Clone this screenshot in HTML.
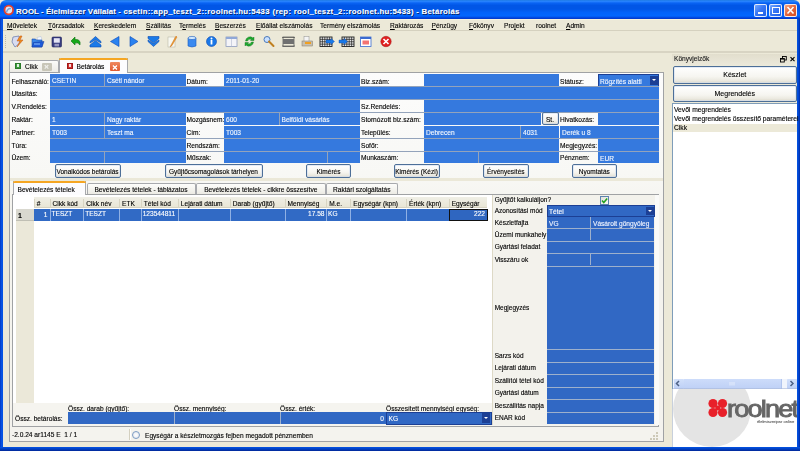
<!DOCTYPE html><html><head><meta charset="utf-8"><style>
html,body{margin:0;padding:0;}
body{width:800px;height:451px;overflow:hidden;position:relative;background:#ece9d8;font-family:"Liberation Sans", sans-serif;}
div{box-sizing:border-box;}
#root div{-webkit-text-stroke:0.12px currentColor;}
#root{position:absolute;left:0;top:0;width:800px;height:451px;overflow:hidden;will-change:opacity;opacity:.999;}
</style></head><body><div id="root">
<div style="position:absolute;left:0px;top:0px;width:800px;height:19px;background:linear-gradient(#1c78e0 0px,#2a86ff 1.2px,#0a64f4 3px,#0056e6 5.5px,#0056e6 9px,#0062fa 12.5px,#0066fe 16px,#0040d8 18px,#0038c8 19px);border-radius:6px 6px 0 0;"></div>
<div style="position:absolute;left:3px;top:19px;width:794px;height:1px;background:#f8f2dc;"></div>
<div style="position:absolute;left:0px;top:19px;width:3px;height:432px;background:linear-gradient(90deg,#0030b8,#0a52e0 1px,#0454e5);"></div>
<div style="position:absolute;left:797px;top:19px;width:3px;height:432px;background:linear-gradient(90deg,#0454e5,#0040c8 2px,#0028a0);"></div>
<div style="position:absolute;left:0px;top:447px;width:800px;height:4px;background:linear-gradient(#0454e5,#0036b0 3px,#002494);"></div>
<svg style="position:absolute;left:3px;top:4px" width="12" height="12"><circle cx="5.8" cy="6" r="4.3" fill="#dfe8f4" stroke="#e8402a" stroke-width="1.8"/><path d="M3.5 8.5 Q4.5 4 8 4.5" stroke="#7aa0d8" stroke-width="1.4" fill="none"/></svg>
<div style="position:absolute;left:16px;top:6.62px;font-size:7.8px;line-height:9.36px;color:#fff;white-space:pre;font-weight:bold;letter-spacing:0.1px;text-shadow:1px 1px 0 #0a246a;">ROOL - Élelmiszer Vállalat - </div>
<div style="position:absolute;left:123.4px;top:6.62px;font-size:7.8px;line-height:9.36px;color:#fff;white-space:pre;font-weight:bold;letter-spacing:0.3px;text-shadow:1px 1px 0 #0a246a;">csetin::app_teszt_2::roolnet.hu:5433 </div>
<div style="position:absolute;left:272.5px;top:6.62px;font-size:7.8px;line-height:9.36px;color:#fff;white-space:pre;font-weight:bold;letter-spacing:0.29px;text-shadow:1px 1px 0 #0a246a;">(rep: rool_teszt_2::roolnet.hu:5433) - Betárolás</div>
<div style="position:absolute;left:754px;top:4.3px;width:13px;height:12.5px;border:1px solid rgba(255,255,255,.85);border-radius:2px;background:linear-gradient(135deg,#74a8ff,#3a78f4 45%,#1f5ee8);"><div style="position:absolute;left:3px;top:7px;width:5px;height:1.6px;background:#fff"></div></div>
<div style="position:absolute;left:769px;top:4.3px;width:13px;height:12.5px;border:1px solid rgba(255,255,255,.85);border-radius:2px;background:linear-gradient(135deg,#74a8ff,#3a78f4 45%,#1f5ee8);"><div style="position:absolute;left:2px;top:2px;width:7.5px;height:6.5px;border:1px solid #fff;border-top-width:1.8px"></div></div>
<div style="position:absolute;left:783.5px;top:4.3px;width:13px;height:12.5px;border:1px solid rgba(255,255,255,.85);border-radius:2px;background:linear-gradient(135deg,#f4a888,#e66a40 45%,#d24c22);"><svg style="position:absolute;left:0;top:0" width="11" height="11"><path d="M2.5 2 L8.5 8.5 M8.5 2 L2.5 8.5" stroke="#fff" stroke-width="1.6"/></svg></div>
<div style="position:absolute;left:3px;top:29.5px;width:794px;height:1.0px;background:#d5d1bf"></div>
<div style="position:absolute;left:7px;top:22.14px;font-size:6.6px;line-height:7.92px;color:#000;white-space:pre;"><u>M</u>űveletek</div>
<div style="position:absolute;left:48px;top:22.14px;font-size:6.6px;line-height:7.92px;color:#000;white-space:pre;"><u>T</u>örzsadatok</div>
<div style="position:absolute;left:94px;top:22.14px;font-size:6.6px;line-height:7.92px;color:#000;white-space:pre;"><u>K</u>ereskedelem</div>
<div style="position:absolute;left:146px;top:22.14px;font-size:6.6px;line-height:7.92px;color:#000;white-space:pre;"><u>S</u>zállítás</div>
<div style="position:absolute;left:179px;top:22.14px;font-size:6.6px;line-height:7.92px;color:#000;white-space:pre;">T<u>e</u>rmelés</div>
<div style="position:absolute;left:215px;top:22.14px;font-size:6.6px;line-height:7.92px;color:#000;white-space:pre;"><u>B</u>eszerzés</div>
<div style="position:absolute;left:256px;top:22.14px;font-size:6.6px;line-height:7.92px;color:#000;white-space:pre;"><u>E</u>lőállat elszámolás</div>
<div style="position:absolute;left:320px;top:22.14px;font-size:6.6px;line-height:7.92px;color:#000;white-space:pre;">Termény elszámolás</div>
<div style="position:absolute;left:390px;top:22.14px;font-size:6.6px;line-height:7.92px;color:#000;white-space:pre;"><u>R</u>aktározás</div>
<div style="position:absolute;left:431.5px;top:22.14px;font-size:6.6px;line-height:7.92px;color:#000;white-space:pre;"><u>P</u>énzügy</div>
<div style="position:absolute;left:469px;top:22.14px;font-size:6.6px;line-height:7.92px;color:#000;white-space:pre;"><u>F</u>őkönyv</div>
<div style="position:absolute;left:504px;top:22.14px;font-size:6.6px;line-height:7.92px;color:#000;white-space:pre;">Pro<u>j</u>ekt</div>
<div style="position:absolute;left:536px;top:22.14px;font-size:6.6px;line-height:7.92px;color:#000;white-space:pre;">roolnet</div>
<div style="position:absolute;left:566px;top:22.14px;font-size:6.6px;line-height:7.92px;color:#000;white-space:pre;"><u>A</u>dmin</div>
<div style="position:absolute;left:3px;top:51px;width:794px;height:1.6000000000000014px;background:#d8d4c3"></div>
<div style="position:absolute;left:5px;top:35px;width:1px;height:1px;background:#c0bca8"></div>
<div style="position:absolute;left:5px;top:37px;width:1px;height:1px;background:#c0bca8"></div>
<div style="position:absolute;left:5px;top:39px;width:1px;height:1px;background:#c0bca8"></div>
<div style="position:absolute;left:5px;top:41px;width:1px;height:1px;background:#c0bca8"></div>
<div style="position:absolute;left:5px;top:43px;width:1px;height:1px;background:#c0bca8"></div>
<div style="position:absolute;left:5px;top:45px;width:1px;height:1px;background:#c0bca8"></div>
<div style="position:absolute;left:5px;top:47px;width:1px;height:1px;background:#c0bca8"></div>
<svg style="position:absolute;left:0;top:0" width="800" height="60" viewBox="0 0 800 60"><path d="M13 37 L19 36 L20 43 L15 47 L12 42Z" fill="#d8dcf0" stroke="#7080b0" stroke-width=".8"/><path d="M20 36 L17 41 L20 41 L17 47 L23 40 L20 40 L22 36Z" fill="#f09020" stroke="#c05010" stroke-width=".5"/><path d="M37 37.5 L41 36.5 L42 40 L38 41Z" fill="#f4f8ff" stroke="#a0b0d0" stroke-width=".4"/><path d="M32 39 L35.5 39 L36.5 40 L42 40 L42 47 L32 47Z" fill="#3a86e8" stroke="#1a4ab0" stroke-width=".6"/><path d="M33.5 42.5 L44 41.5 L42 47 L32 47Z" fill="#1e5ad8" stroke="#10389a" stroke-width=".5"/><rect x="34" y="43.5" width="6" height="1" fill="#8cc0f8"/><rect x="52" y="37" width="9.5" height="10" rx="1" fill="#383c80" stroke="#20245a" stroke-width=".6"/><rect x="53.8" y="38.2" width="6" height="4.5" fill="#e4e4f4"/><rect x="54.5" y="43.8" width="4.5" height="2.6" fill="#9898c0"/><path d="M71 41 L75 37 L75 39.5 Q81 39 80 45 Q78 42 75 43 L75 45Z" fill="#18a818" stroke="#0a7010" stroke-width=".6"/><path d="M90 41.5 L95.5 36.5 L101 41.5 L101 43 L95.5 39.8 L90 43Z" fill="#1a7ae8" stroke="#0a4ab0" stroke-width=".6" stroke-linejoin="round"/><path d="M90 45 L95.5 40.5 L101 45 L101 47 L90 47Z" fill="#1a7ae8" stroke="#0a4ab0" stroke-width=".6" stroke-linejoin="round"/><path d="M110.5 41.5 L119 36.5 L119 46.5Z" fill="#2a82f0" stroke="#0a4ab8" stroke-width=".6" stroke-linejoin="round"/><path d="M138 41.5 L130 36.5 L130 46.5Z" fill="#2a82f0" stroke="#0a4ab8" stroke-width=".6" stroke-linejoin="round"/><path d="M148 36.5 L159 36.5 L159 38.5 L153.5 43 L148 38.5Z" fill="#1a7ae8" stroke="#0a4ab0" stroke-width=".6" stroke-linejoin="round"/><path d="M148 40 L153.5 43.5 L159 40 L159 41.5 L153.5 46.5 L148 41.5Z" fill="#1a7ae8" stroke="#0a4ab0" stroke-width=".6" stroke-linejoin="round"/><rect x="168" y="37" width="7" height="10" fill="#f8f8f0" stroke="#b0b0a0" stroke-width=".5"/><path d="M176 36 L171 45 L170 47 L172 45.5 L177 37Z" fill="#f0a030" stroke="#c06010" stroke-width=".4"/><path d="M188 38 L188 46 Q192 48 196 46 L196 38Z" fill="#3a8af0" stroke="#1a5ac0" stroke-width=".6"/><ellipse cx="192" cy="38" rx="4" ry="1.6" fill="#d0e8ff" stroke="#1a5ac0" stroke-width=".6"/><circle cx="211.5" cy="41.5" r="5" fill="#1a78e8" stroke="#0a48b0" stroke-width=".6"/><rect x="210.6" y="40" width="1.8" height="4.5" fill="#fff"/><circle cx="211.5" cy="38.5" r="1" fill="#fff"/><rect x="226" y="37" width="11" height="9.5" fill="#f4f4f8" stroke="#8090b8" stroke-width=".7"/><rect x="226" y="37" width="11" height="2" fill="#90a8d8"/><line x1="231.5" y1="39" x2="231.5" y2="46.5" stroke="#b0b8d0" stroke-width=".6"/><path d="M245.5 41 A4.5 4.5 0 0 1 253 38 L254 37 L254 40.5 L250.5 40.5 L251.5 39.5 A3 3 0 0 0 247.5 41Z" fill="#20a830" stroke="#0a7018" stroke-width=".4"/><path d="M253.5 42 A4.5 4.5 0 0 1 246 45 L245 46 L245 42.5 L248.5 42.5 L247.5 43.5 A3 3 0 0 0 251.5 42Z" fill="#20a830" stroke="#0a7018" stroke-width=".4"/><circle cx="267" cy="39.5" r="3" fill="#c8e0ff" stroke="#4a78b8" stroke-width="1"/><path d="M269 41.5 L273.5 46" stroke="#c08020" stroke-width="2" stroke-linecap="round"/><rect x="283" y="37" width="11" height="9.5" fill="none" stroke="#606060" stroke-width=".8"/><rect x="283" y="39" width="11" height="5" fill="#707070"/><line x1="282" y1="37.5" x2="295" y2="37.5" stroke="#404040" stroke-width=".6"/><line x1="282" y1="46" x2="295" y2="46" stroke="#404040" stroke-width=".6"/><rect x="304" y="36.5" width="5" height="5" fill="#f4f4f4" stroke="#909090" stroke-width=".5"/><rect x="302" y="41" width="10.5" height="5" fill="#c8c0b0" stroke="#807868" stroke-width=".5"/><rect x="305" y="42" width="6" height="2" fill="#f0a020"/><rect x="320" y="37" width="12" height="9.5" fill="#e8e8e8" stroke="#202020" stroke-width=".9"/><line x1="322.4" y1="37" x2="322.4" y2="46.5" stroke="#202020" stroke-width=".7"/><line x1="324.8" y1="37" x2="324.8" y2="46.5" stroke="#202020" stroke-width=".7"/><line x1="327.2" y1="37" x2="327.2" y2="46.5" stroke="#202020" stroke-width=".7"/><line x1="329.6" y1="37" x2="329.6" y2="46.5" stroke="#202020" stroke-width=".7"/><line x1="320" y1="39.375" x2="332" y2="39.375" stroke="#202020" stroke-width=".7"/><line x1="320" y1="41.75" x2="332" y2="41.75" stroke="#202020" stroke-width=".7"/><line x1="320" y1="44.125" x2="332" y2="44.125" stroke="#202020" stroke-width=".7"/><path d="M326 40 L331 40 L331 38.5 L334.5 41.5 L331 44.5 L331 43 L326 43Z" fill="#1a7ae8" stroke="#0a4ab0" stroke-width=".4"/><rect x="342" y="37" width="12" height="9.5" fill="#e8e8e8" stroke="#202020" stroke-width=".9"/><line x1="344.4" y1="37" x2="344.4" y2="46.5" stroke="#202020" stroke-width=".7"/><line x1="346.8" y1="37" x2="346.8" y2="46.5" stroke="#202020" stroke-width=".7"/><line x1="349.2" y1="37" x2="349.2" y2="46.5" stroke="#202020" stroke-width=".7"/><line x1="351.6" y1="37" x2="351.6" y2="46.5" stroke="#202020" stroke-width=".7"/><line x1="342" y1="39.375" x2="354" y2="39.375" stroke="#202020" stroke-width=".7"/><line x1="342" y1="41.75" x2="354" y2="41.75" stroke="#202020" stroke-width=".7"/><line x1="342" y1="44.125" x2="354" y2="44.125" stroke="#202020" stroke-width=".7"/><path d="M339 40 L344 40 L344 38.5 L347.5 41.5 L344 44.5 L344 43 L339 43Z" fill="#1a7ae8" stroke="#0a4ab0" stroke-width=".4"/><rect x="360.5" y="37" width="10.5" height="9.5" fill="#fff" stroke="#3a6ad0" stroke-width=".8"/><rect x="360.5" y="37" width="10.5" height="2" fill="#3a6ad0"/><rect x="362.5" y="40.5" width="6.5" height="4" fill="#f05050" opacity=".8"/><circle cx="386" cy="41.5" r="5.2" fill="#e02020" stroke="#a01010" stroke-width=".5"/><path d="M383.5 39 L388.5 44 M388.5 39 L383.5 44" stroke="#fff" stroke-width="1.6"/></svg>
<div style="position:absolute;left:672px;top:54px;width:125px;height:11px;background:linear-gradient(#e2decd,#ebe8da);"></div>
<div style="position:absolute;left:674px;top:55.14px;font-size:6.6px;line-height:7.92px;color:#222;white-space:pre;">Könyvjelzők</div>
<svg style="position:absolute;left:778px;top:54px" width="20" height="11"><rect x="4.5" y="2.5" width="3.8" height="3.5" fill="none" stroke="#000" stroke-width=".9"/><rect x="2.5" y="4.5" width="3.8" height="3.5" fill="#e6e2d2" stroke="#000" stroke-width=".9"/><line x1="2.5" y1="5" x2="6.3" y2="5" stroke="#000" stroke-width="1.1"/><path d="M12.5 3.2 L16.5 7.2 M16.5 3.2 L12.5 7.2" stroke="#000" stroke-width="1.1"/></svg>
<div style="position:absolute;left:673px;top:65.5px;width:123.5px;height:18.0px;border:1px solid #4d6f98;border-radius:2px;background:linear-gradient(#ffffff,#f6f5f0 60%,#ebe9e0 85%,#dcd8c8);box-shadow:inset 0 0 0 1px rgba(210,222,240,.6);"></div>
<div style="position:absolute;left:673px;width:123.5px;top:71.40px;font-size:7px;line-height:8.40px;color:#000;white-space:pre;text-align:center;">Készlet</div>
<div style="position:absolute;left:673px;top:84.5px;width:123.5px;height:17.0px;border:1px solid #4d6f98;border-radius:2px;background:linear-gradient(#ffffff,#f6f5f0 60%,#ebe9e0 85%,#dcd8c8);box-shadow:inset 0 0 0 1px rgba(210,222,240,.6);"></div>
<div style="position:absolute;left:673px;width:123.5px;top:89.90px;font-size:7px;line-height:8.40px;color:#000;white-space:pre;text-align:center;">Megrendelés</div>
<div style="position:absolute;left:672px;top:102.5px;width:125px;height:286.5px;background:#fff;border:1px solid #7f9db9;border-right:none;"></div>
<div style="position:absolute;left:673px;top:123.5px;width:124px;height:8.0px;background:#ece9d8;"></div>
<div style="position:absolute;left:674px;top:105.58px;font-size:6.7px;line-height:8.04px;color:#000;white-space:pre;">Vevői megrendelés</div>
<div style="position:absolute;left:674px;top:115.08px;font-size:6.7px;line-height:8.04px;color:#000;white-space:pre;">Vevői megrendelés összesítő paraméterei</div>
<div style="position:absolute;left:674px;top:124.38px;font-size:6.7px;line-height:8.04px;color:#000;white-space:pre;">Cikk</div>
<div style="position:absolute;left:673px;top:378.5px;width:124px;height:10.5px;background:#f0f4fc;"></div>
<div style="position:absolute;left:673.5px;top:378.8px;width:10.0px;height:9.800000000000011px;background:linear-gradient(#d2e0fa,#bccff6);border-radius:1px;"></div>
<div style="position:absolute;left:683.5px;top:378.8px;width:98.5px;height:9.800000000000011px;background:linear-gradient(#cddcfa,#bed0f6);border-right:1px solid #b0c4ee;"></div>
<div style="position:absolute;left:787px;top:378.8px;width:9.5px;height:9.800000000000011px;background:linear-gradient(#d2e0fa,#bccff6);border-radius:1px;"></div>
<div style="position:absolute;left:673px;top:388.2px;width:124px;height:1.0px;background:#a8b8d8;opacity:.6"></div>
<svg style="position:absolute;left:673px;top:378px" width="124" height="11"><path d="M6 3 L3.5 5.5 L6 8" stroke="#4d6185" stroke-width="1.5" fill="none"/><path d="M117.5 3 L120 5.5 L117.5 8" stroke="#4d6185" stroke-width="1.5" fill="none"/><path d="M57 4 L57 7.5 M59 4 L59 7.5 M61 4 L61 7.5" stroke="#eef3fd" stroke-width=".8"/></svg>
<div style="position:absolute;left:672px;top:389px;width:125px;height:58px;background:#fff;border-left:1px solid #c8d0dc;"></div>
<div style="position:absolute;left:673px;top:389px;width:124px;height:58px;overflow:hidden;"><div style="position:absolute;left:0px;top:-18px;width:78px;height:76px;border-radius:50%;background:#e4e4e4;"></div><svg style="position:absolute;left:0;top:0" width="124" height="58" viewBox="673 389 124 58"><circle cx="713" cy="403.5" r="4.6" fill="#e8202a"/><circle cx="722.5" cy="403.5" r="4.6" fill="#e8202a"/><circle cx="713" cy="412.5" r="4.6" fill="#e8202a"/><circle cx="722.5" cy="412.5" r="4.6" fill="#e8202a"/><circle cx="717.7" cy="408" r="2.5" fill="#e8202a"/></svg><div style="position:absolute;left:54px;top:7.7px;font-size:24px;line-height:24px;font-weight:normal;color:#666;letter-spacing:-1.6px;-webkit-text-stroke:0.9px #666;transform:scaleX(1.13);transform-origin:0 0;white-space:pre">roolnet</div><div style="position:absolute;left:84px;top:29.5px;font-size:4.1px;line-height:5px;color:#666;white-space:pre">élelmiszeripar online</div></div>
<div style="position:absolute;left:9px;top:59.5px;width:50px;height:12.5px;background:linear-gradient(#fbfbf9,#ecebe5);border:1px solid #a7a9ad;border-bottom:none;border-radius:2px 2px 0 0;"></div>
<div style="position:absolute;left:15px;top:62.5px;width:5.5px;height:6.0px;background:#3e9c3e;border:1px solid #2a7a2a;"></div>
<div style="position:absolute;left:17px;top:64px;width:1.5px;height:3px;background:#e0f0e0;"></div>
<div style="position:absolute;left:25px;top:63.14px;font-size:6.6px;line-height:7.92px;color:#000;white-space:pre;">Cikk</div>
<div style="position:absolute;left:42px;top:63px;width:9.5px;height:7.5px;background:#c8c6b8;border-radius:1px;"></div>
<div style="position:absolute;left:42px;width:9.5px;top:64.10px;font-size:6px;line-height:7.20px;color:#eeeeea;white-space:pre;text-align:center;font-weight:bold;">✕</div>
<div style="position:absolute;left:59px;top:58px;width:68.5px;height:15px;background:#fcfcfe;border:1px solid #a7a9ad;border-top:none;border-bottom:none;"></div>
<div style="position:absolute;left:59px;top:57.5px;width:68.5px;height:2.5px;background:#f5a623;border-radius:2px 2px 0 0;"></div>
<div style="position:absolute;left:67px;top:62.5px;width:5.5px;height:6.5px;background:#d03030;border:1px solid #a01818;"></div>
<div style="position:absolute;left:68.5px;top:64px;width:2.5px;height:3px;background:#f8d8d8;"></div>
<div style="position:absolute;left:76.5px;top:63.14px;font-size:6.6px;line-height:7.92px;color:#000;white-space:pre;">Betárolás</div>
<div style="position:absolute;left:110px;top:62px;width:9.5px;height:8.5px;background:linear-gradient(#f08a60,#e05a30);border-radius:1px;"></div>
<div style="position:absolute;left:110px;width:9.5px;top:63.60px;font-size:6.5px;line-height:7.80px;color:#fff;white-space:pre;text-align:center;font-weight:bold;">✕</div>
<div style="position:absolute;left:8.5px;top:72px;width:655.5px;height:369.5px;border:1px solid #a0a2a4;background:linear-gradient(#fcfcfc 0px,#f8f8f5 100px,#f4f3ee 140px,#f4f3ee);"></div>
<div style="position:absolute;left:60px;top:72px;width:67px;height:1.5px;background:#fcfcfe;"></div>
<div style="position:absolute;left:11.5px;top:77.64px;font-size:6.6px;line-height:7.92px;color:#000;white-space:pre;">Felhasználó:</div>
<div style="position:absolute;left:50px;top:74px;width:54px;height:12px;background:#3579de;"></div>
<div style="position:absolute;left:52px;top:77.44px;font-size:6.6px;line-height:7.92px;color:#f4f8ff;white-space:pre;">CSETIN</div>
<div style="position:absolute;left:105px;top:74px;width:81px;height:12px;background:#3579de;"></div>
<div style="position:absolute;left:107px;top:77.44px;font-size:6.6px;line-height:7.92px;color:#f4f8ff;white-space:pre;">Cséti nándor</div>
<div style="position:absolute;left:186.5px;top:77.64px;font-size:6.6px;line-height:7.92px;color:#000;white-space:pre;">Dátum:</div>
<div style="position:absolute;left:224px;top:74px;width:136px;height:12px;background:#3579de;"></div>
<div style="position:absolute;left:226px;top:77.44px;font-size:6.6px;line-height:7.92px;color:#f4f8ff;white-space:pre;">2011-01-20</div>
<div style="position:absolute;left:361px;top:77.64px;font-size:6.6px;line-height:7.92px;color:#000;white-space:pre;">Biz.szám:</div>
<div style="position:absolute;left:424px;top:74px;width:135px;height:12px;background:#3579de;"></div>
<div style="position:absolute;left:560px;top:77.64px;font-size:6.6px;line-height:7.92px;color:#000;white-space:pre;">Státusz:</div>
<div style="position:absolute;left:597.5px;top:73.5px;width:61.5px;height:13.5px;background:#3579de;border:1px solid #1c3f94;"></div>
<div style="position:absolute;left:600px;top:77.64px;font-size:6.6px;line-height:7.92px;color:#f4f8ff;white-space:pre;">Rögzítés alatti</div>
<div style="position:absolute;left:650px;top:75.5px;width:7.5px;height:9.5px;background:#1c3f94;"></div>
<div style="position:absolute;left:651.8px;top:79px;width:0;height:0;border-left:2px solid transparent;border-right:2px solid transparent;border-top:2.5px solid #fff;"></div>
<div style="position:absolute;left:11.5px;top:90.14px;font-size:6.6px;line-height:7.92px;color:#000;white-space:pre;">Utasítás:</div>
<div style="position:absolute;left:50px;top:87px;width:609px;height:12px;background:#3579de;"></div>
<div style="position:absolute;left:11.5px;top:103.14px;font-size:6.6px;line-height:7.92px;color:#000;white-space:pre;">V.Rendelés:</div>
<div style="position:absolute;left:50px;top:100px;width:310px;height:11.5px;background:#3579de;"></div>
<div style="position:absolute;left:361px;top:103.14px;font-size:6.6px;line-height:7.92px;color:#000;white-space:pre;">Sz.Rendelés:</div>
<div style="position:absolute;left:424px;top:100px;width:235px;height:11.5px;background:#3579de;"></div>
<div style="position:absolute;left:50px;top:86px;width:609px;height:1px;background:#93a3bb;"></div>
<div style="position:absolute;left:50px;top:99px;width:609px;height:1px;background:#93a3bb;"></div>
<div style="position:absolute;left:50px;top:111.5px;width:609px;height:1.5px;background:#93a3bb;"></div>
<div style="position:absolute;left:11.5px;top:116.14px;font-size:6.6px;line-height:7.92px;color:#000;white-space:pre;">Raktár:</div>
<div style="position:absolute;left:50px;top:113px;width:54px;height:11.5px;background:#3579de;"></div>
<div style="position:absolute;left:52px;top:116.19px;font-size:6.6px;line-height:7.92px;color:#f4f8ff;white-space:pre;">1</div>
<div style="position:absolute;left:105px;top:113px;width:81px;height:11.5px;background:#3579de;"></div>
<div style="position:absolute;left:107px;top:116.19px;font-size:6.6px;line-height:7.92px;color:#f4f8ff;white-space:pre;">Nagy raktár</div>
<div style="position:absolute;left:186.5px;top:116.14px;font-size:6.6px;line-height:7.92px;color:#000;white-space:pre;">Mozgásnem:</div>
<div style="position:absolute;left:224px;top:113px;width:54.5px;height:11.5px;background:#3579de;"></div>
<div style="position:absolute;left:226px;top:116.19px;font-size:6.6px;line-height:7.92px;color:#f4f8ff;white-space:pre;">600</div>
<div style="position:absolute;left:279.5px;top:113px;width:80.5px;height:11.5px;background:#3579de;"></div>
<div style="position:absolute;left:281.5px;top:116.19px;font-size:6.6px;line-height:7.92px;color:#f4f8ff;white-space:pre;">Belföldi vásárlás</div>
<div style="position:absolute;left:361px;top:116.14px;font-size:6.6px;line-height:7.92px;color:#000;white-space:pre;">Stornózott biz.szám:</div>
<div style="position:absolute;left:424px;top:113px;width:117px;height:11.5px;background:#3579de;"></div>
<div style="position:absolute;left:541.5px;top:112px;width:17.0px;height:13px;border:1px solid #4d6f98;border-radius:2px;background:linear-gradient(#ffffff,#f6f5f0 60%,#ebe9e0 85%,#dcd8c8);box-shadow:inset 0 0 0 1px rgba(210,222,240,.6);"></div>
<div style="position:absolute;left:541.5px;width:17.0px;top:115.64px;font-size:6.6px;line-height:7.92px;color:#000;white-space:pre;text-align:center;">St.</div>
<div style="position:absolute;left:560px;top:116.14px;font-size:6.6px;line-height:7.92px;color:#000;white-space:pre;">Hivatkozás:</div>
<div style="position:absolute;left:598px;top:113px;width:61px;height:11.5px;background:#3579de;"></div>
<div style="position:absolute;left:11.5px;top:129.14px;font-size:6.6px;line-height:7.92px;color:#000;white-space:pre;">Partner:</div>
<div style="position:absolute;left:50px;top:126px;width:54px;height:12px;background:#3579de;"></div>
<div style="position:absolute;left:52px;top:129.44px;font-size:6.6px;line-height:7.92px;color:#f4f8ff;white-space:pre;">T003</div>
<div style="position:absolute;left:105px;top:126px;width:81px;height:12px;background:#3579de;"></div>
<div style="position:absolute;left:107px;top:129.44px;font-size:6.6px;line-height:7.92px;color:#f4f8ff;white-space:pre;">Teszt ma</div>
<div style="position:absolute;left:186.5px;top:129.14px;font-size:6.6px;line-height:7.92px;color:#000;white-space:pre;">Cím:</div>
<div style="position:absolute;left:224px;top:126px;width:136px;height:12px;background:#3579de;"></div>
<div style="position:absolute;left:226px;top:129.44px;font-size:6.6px;line-height:7.92px;color:#f4f8ff;white-space:pre;">T003</div>
<div style="position:absolute;left:361px;top:129.14px;font-size:6.6px;line-height:7.92px;color:#000;white-space:pre;">Település:</div>
<div style="position:absolute;left:424px;top:126px;width:96px;height:12px;background:#3579de;"></div>
<div style="position:absolute;left:426px;top:129.44px;font-size:6.6px;line-height:7.92px;color:#f4f8ff;white-space:pre;">Debrecen</div>
<div style="position:absolute;left:521px;top:126px;width:38px;height:12px;background:#3579de;"></div>
<div style="position:absolute;left:523px;top:129.44px;font-size:6.6px;line-height:7.92px;color:#f4f8ff;white-space:pre;">4031</div>
<div style="position:absolute;left:560px;top:126px;width:99px;height:12px;background:#3579de;"></div>
<div style="position:absolute;left:562px;top:129.44px;font-size:6.6px;line-height:7.92px;color:#f4f8ff;white-space:pre;">Derék u 8</div>
<div style="position:absolute;left:50px;top:138px;width:609px;height:1px;background:#93a3bb;"></div>
<div style="position:absolute;left:11.5px;top:142.14px;font-size:6.6px;line-height:7.92px;color:#000;white-space:pre;">Túra:</div>
<div style="position:absolute;left:50px;top:139px;width:136px;height:12px;background:#3579de;"></div>
<div style="position:absolute;left:186.5px;top:142.14px;font-size:6.6px;line-height:7.92px;color:#000;white-space:pre;">Rendszám:</div>
<div style="position:absolute;left:224px;top:139px;width:136px;height:12px;background:#3579de;"></div>
<div style="position:absolute;left:361px;top:142.14px;font-size:6.6px;line-height:7.92px;color:#000;white-space:pre;">Sofőr:</div>
<div style="position:absolute;left:424px;top:139px;width:135px;height:12px;background:#3579de;"></div>
<div style="position:absolute;left:560px;top:142.14px;font-size:6.6px;line-height:7.92px;color:#000;white-space:pre;">Megjegyzés:</div>
<div style="position:absolute;left:598px;top:139px;width:61px;height:12px;background:#3579de;"></div>
<div style="position:absolute;left:50px;top:151px;width:609px;height:1px;background:#93a3bb;"></div>
<div style="position:absolute;left:11.5px;top:154.04px;font-size:6.6px;line-height:7.92px;color:#000;white-space:pre;">Üzem:</div>
<div style="position:absolute;left:50px;top:152px;width:54px;height:10.800000000000011px;background:#3579de;"></div>
<div style="position:absolute;left:105px;top:152px;width:81px;height:10.800000000000011px;background:#3579de;"></div>
<div style="position:absolute;left:186.5px;top:154.04px;font-size:6.6px;line-height:7.92px;color:#000;white-space:pre;">Műszak:</div>
<div style="position:absolute;left:224px;top:152px;width:102.5px;height:10.800000000000011px;background:#3579de;"></div>
<div style="position:absolute;left:327.5px;top:152px;width:32.5px;height:10.800000000000011px;background:#3579de;"></div>
<div style="position:absolute;left:361px;top:154.04px;font-size:6.6px;line-height:7.92px;color:#000;white-space:pre;">Munkaszám:</div>
<div style="position:absolute;left:424px;top:152px;width:53.5px;height:10.800000000000011px;background:#3579de;"></div>
<div style="position:absolute;left:478.5px;top:152px;width:80.5px;height:10.800000000000011px;background:#3579de;"></div>
<div style="position:absolute;left:560px;top:154.04px;font-size:6.6px;line-height:7.92px;color:#000;white-space:pre;">Pénznem:</div>
<div style="position:absolute;left:598px;top:152px;width:61px;height:10.800000000000011px;background:#3579de;"></div>
<div style="position:absolute;left:600px;top:154.84px;font-size:6.6px;line-height:7.92px;color:#f4f8ff;white-space:pre;">EUR</div>
<div style="position:absolute;left:104px;top:74px;width:1px;height:12px;background:#93a3bb;"></div>
<div style="position:absolute;left:104px;top:113px;width:1px;height:11.5px;background:#93a3bb;"></div>
<div style="position:absolute;left:104px;top:126px;width:1px;height:12px;background:#93a3bb;"></div>
<div style="position:absolute;left:104px;top:152px;width:1px;height:10.800000000000011px;background:#93a3bb;"></div>
<div style="position:absolute;left:278.5px;top:113px;width:1.0px;height:11.5px;background:#93a3bb;"></div>
<div style="position:absolute;left:326.5px;top:152px;width:1.0px;height:10.800000000000011px;background:#93a3bb;"></div>
<div style="position:absolute;left:520px;top:126px;width:1px;height:12px;background:#93a3bb;"></div>
<div style="position:absolute;left:477.5px;top:152px;width:1.0px;height:10.800000000000011px;background:#93a3bb;"></div>
<div style="position:absolute;left:54.5px;top:164px;width:66.0px;height:13.5px;border:1px solid #4d6f98;border-radius:2px;background:linear-gradient(#ffffff,#f6f5f0 60%,#ebe9e0 85%,#dcd8c8);box-shadow:inset 0 0 0 1px rgba(210,222,240,.6);"></div>
<div style="position:absolute;left:54.5px;width:66.0px;top:167.95px;font-size:6.5px;line-height:7.80px;color:#000;white-space:pre;text-align:center;">Vonalkódos betárolás</div>
<div style="position:absolute;left:164.5px;top:164px;width:98.0px;height:13.5px;border:1px solid #4d6f98;border-radius:2px;background:linear-gradient(#ffffff,#f6f5f0 60%,#ebe9e0 85%,#dcd8c8);box-shadow:inset 0 0 0 1px rgba(210,222,240,.6);"></div>
<div style="position:absolute;left:164.5px;width:98.0px;top:167.95px;font-size:6.5px;line-height:7.80px;color:#000;white-space:pre;text-align:center;">Gyűjtőcsomagolások tárhelyen</div>
<div style="position:absolute;left:306px;top:164px;width:45px;height:13.5px;border:1px solid #4d6f98;border-radius:2px;background:linear-gradient(#ffffff,#f6f5f0 60%,#ebe9e0 85%,#dcd8c8);box-shadow:inset 0 0 0 1px rgba(210,222,240,.6);"></div>
<div style="position:absolute;left:306px;width:45px;top:167.95px;font-size:6.5px;line-height:7.80px;color:#000;white-space:pre;text-align:center;">Kimérés</div>
<div style="position:absolute;left:393.5px;top:164px;width:46.0px;height:13.5px;border:1px solid #4d6f98;border-radius:2px;background:linear-gradient(#ffffff,#f6f5f0 60%,#ebe9e0 85%,#dcd8c8);box-shadow:inset 0 0 0 1px rgba(210,222,240,.6);"></div>
<div style="position:absolute;left:393.5px;width:46.0px;top:167.95px;font-size:6.5px;line-height:7.80px;color:#000;white-space:pre;text-align:center;">Kimérés (Kézi)</div>
<div style="position:absolute;left:483px;top:164px;width:45.5px;height:13.5px;border:1px solid #4d6f98;border-radius:2px;background:linear-gradient(#ffffff,#f6f5f0 60%,#ebe9e0 85%,#dcd8c8);box-shadow:inset 0 0 0 1px rgba(210,222,240,.6);"></div>
<div style="position:absolute;left:483px;width:45.5px;top:167.95px;font-size:6.5px;line-height:7.80px;color:#000;white-space:pre;text-align:center;">Érvényesítés</div>
<div style="position:absolute;left:571.5px;top:164px;width:45.5px;height:13.5px;border:1px solid #4d6f98;border-radius:2px;background:linear-gradient(#ffffff,#f6f5f0 60%,#ebe9e0 85%,#dcd8c8);box-shadow:inset 0 0 0 1px rgba(210,222,240,.6);"></div>
<div style="position:absolute;left:571.5px;width:45.5px;top:167.95px;font-size:6.5px;line-height:7.80px;color:#000;white-space:pre;text-align:center;">Nyomtatás</div>
<div style="position:absolute;left:9.5px;top:177.5px;width:653.5px;height:3.0px;background:#ebe8d8;"></div>
<div style="position:absolute;left:12px;top:193.5px;width:647px;height:233.5px;border:1px solid #a0a2a4;background:#f5f4ef;"></div>
<div style="position:absolute;left:12.5px;top:181px;width:73.5px;height:14px;background:#fcfcfe;border:1px solid #a7a9ad;border-top:none;border-bottom:none;"></div>
<div style="position:absolute;left:12.5px;top:181px;width:73.5px;height:2.3000000000000114px;background:#f5a623;border-radius:2px 2px 0 0;"></div>
<div style="position:absolute;left:17.5px;top:185.64px;font-size:6.6px;line-height:7.92px;color:#000;white-space:pre;">Bevételezés tételek</div>
<div style="position:absolute;left:86.5px;top:182.5px;width:109.0px;height:11.5px;background:linear-gradient(#fdfdfb,#ecebe4);border:1px solid #a7a9ad;border-bottom:none;border-radius:2px 2px 0 0;"></div>
<div style="position:absolute;left:86.5px;width:109.0px;top:185.84px;font-size:6.6px;line-height:7.92px;color:#000;white-space:pre;text-align:center;">Bevételezés tételek - táblázatos</div>
<div style="position:absolute;left:196px;top:182.5px;width:129.5px;height:11.5px;background:linear-gradient(#fdfdfb,#ecebe4);border:1px solid #a7a9ad;border-bottom:none;border-radius:2px 2px 0 0;"></div>
<div style="position:absolute;left:196px;width:129.5px;top:185.84px;font-size:6.6px;line-height:7.92px;color:#000;white-space:pre;text-align:center;">Bevételezés tételek - cikkre összesítve</div>
<div style="position:absolute;left:326px;top:182.5px;width:71.5px;height:11.5px;background:linear-gradient(#fdfdfb,#ecebe4);border:1px solid #a7a9ad;border-bottom:none;border-radius:2px 2px 0 0;"></div>
<div style="position:absolute;left:326px;width:71.5px;top:185.84px;font-size:6.6px;line-height:7.92px;color:#000;white-space:pre;text-align:center;">Raktári szolgáltatás</div>
<div style="position:absolute;left:13px;top:194.5px;width:479px;height:208.0px;background:#fff;"></div>
<div style="position:absolute;left:15.6px;top:208.5px;width:18.199999999999996px;height:194.0px;background:#ebe8d9;"></div>
<div style="position:absolute;left:16px;top:208.5px;width:18px;height:12.099999999999994px;background:#d9d8cf;border-bottom:1px solid #c0bfb4;"></div>
<div style="position:absolute;left:18px;top:211.90px;font-size:7px;line-height:8.40px;color:#000;white-space:pre;font-weight:bold;">1</div>
<div style="position:absolute;left:33.8px;top:197.3px;width:453.7px;height:11.199999999999989px;background:linear-gradient(#f0efe6,#e9e6d6);border-bottom:1px solid #d6d2c0;"></div>
<div style="position:absolute;left:36.8px;top:199.64px;font-size:6.6px;line-height:7.92px;color:#000;white-space:pre;">#</div>
<div style="position:absolute;left:33.8px;top:199px;width:1.0px;height:8.5px;background:#d8d4c2;"></div>
<div style="position:absolute;left:52.5px;top:199.64px;font-size:6.6px;line-height:7.92px;color:#000;white-space:pre;">Cikk kód</div>
<div style="position:absolute;left:49.5px;top:199px;width:1.0px;height:8.5px;background:#d8d4c2;"></div>
<div style="position:absolute;left:86.2px;top:199.64px;font-size:6.6px;line-height:7.92px;color:#000;white-space:pre;">Cikk név</div>
<div style="position:absolute;left:83.2px;top:199px;width:1.0px;height:8.5px;background:#d8d4c2;"></div>
<div style="position:absolute;left:122px;top:199.64px;font-size:6.6px;line-height:7.92px;color:#000;white-space:pre;">ETK</div>
<div style="position:absolute;left:119px;top:199px;width:1px;height:8.5px;background:#d8d4c2;"></div>
<div style="position:absolute;left:143.7px;top:199.64px;font-size:6.6px;line-height:7.92px;color:#000;white-space:pre;">Tétel kód</div>
<div style="position:absolute;left:140.7px;top:199px;width:1.0px;height:8.5px;background:#d8d4c2;"></div>
<div style="position:absolute;left:180.8px;top:199.64px;font-size:6.6px;line-height:7.92px;color:#000;white-space:pre;">Lejárati dátum</div>
<div style="position:absolute;left:177.8px;top:199px;width:1.0px;height:8.5px;background:#d8d4c2;"></div>
<div style="position:absolute;left:232.8px;top:199.64px;font-size:6.6px;line-height:7.92px;color:#000;white-space:pre;">Darab (gyűjtő)</div>
<div style="position:absolute;left:229.8px;top:199px;width:1.0px;height:8.5px;background:#d8d4c2;"></div>
<div style="position:absolute;left:287.5px;top:199.64px;font-size:6.6px;line-height:7.92px;color:#000;white-space:pre;">Mennyiség</div>
<div style="position:absolute;left:284.5px;top:199px;width:1.0px;height:8.5px;background:#d8d4c2;"></div>
<div style="position:absolute;left:329.2px;top:199.64px;font-size:6.6px;line-height:7.92px;color:#000;white-space:pre;">M.e.</div>
<div style="position:absolute;left:326.2px;top:199px;width:1.0px;height:8.5px;background:#d8d4c2;"></div>
<div style="position:absolute;left:353.3px;top:199.64px;font-size:6.6px;line-height:7.92px;color:#000;white-space:pre;">Egységár (kpn)</div>
<div style="position:absolute;left:350.3px;top:199px;width:1.0px;height:8.5px;background:#d8d4c2;"></div>
<div style="position:absolute;left:409px;top:199.64px;font-size:6.6px;line-height:7.92px;color:#000;white-space:pre;">Érték (kpn)</div>
<div style="position:absolute;left:406px;top:199px;width:1px;height:8.5px;background:#d8d4c2;"></div>
<div style="position:absolute;left:451.7px;top:199.64px;font-size:6.6px;line-height:7.92px;color:#000;white-space:pre;">Egységár</div>
<div style="position:absolute;left:448.7px;top:199px;width:1.0px;height:8.5px;background:#d8d4c2;"></div>
<div style="position:absolute;left:33.8px;top:208.5px;width:453.7px;height:12.099999999999994px;background:#316ac5;"></div>
<div style="position:absolute;left:49.5px;top:208.5px;width:1.0px;height:12.099999999999994px;background:#8fb0e4;"></div>
<div style="position:absolute;left:83.2px;top:208.5px;width:1.0px;height:12.099999999999994px;background:#8fb0e4;"></div>
<div style="position:absolute;left:119px;top:208.5px;width:1px;height:12.099999999999994px;background:#8fb0e4;"></div>
<div style="position:absolute;left:140.7px;top:208.5px;width:1.0px;height:12.099999999999994px;background:#8fb0e4;"></div>
<div style="position:absolute;left:177.8px;top:208.5px;width:1.0px;height:12.099999999999994px;background:#8fb0e4;"></div>
<div style="position:absolute;left:229.8px;top:208.5px;width:1.0px;height:12.099999999999994px;background:#8fb0e4;"></div>
<div style="position:absolute;left:284.5px;top:208.5px;width:1.0px;height:12.099999999999994px;background:#8fb0e4;"></div>
<div style="position:absolute;left:326.2px;top:208.5px;width:1.0px;height:12.099999999999994px;background:#8fb0e4;"></div>
<div style="position:absolute;left:350.3px;top:208.5px;width:1.0px;height:12.099999999999994px;background:#8fb0e4;"></div>
<div style="position:absolute;left:406px;top:208.5px;width:1px;height:12.099999999999994px;background:#8fb0e4;"></div>
<div style="position:absolute;left:448.7px;top:208.5px;width:1.0px;height:12.099999999999994px;background:#8fb0e4;"></div>
<div style="position:absolute;right:752.5px;top:210.64px;font-size:6.6px;line-height:7.92px;color:#fff;white-space:pre;text-align:right;">1</div>
<div style="position:absolute;left:51.5px;top:210.44px;font-size:6.6px;line-height:7.92px;color:#fff;white-space:pre;">TESZT</div>
<div style="position:absolute;left:85.2px;top:210.44px;font-size:6.6px;line-height:7.92px;color:#fff;white-space:pre;">TESZT</div>
<div style="position:absolute;left:142.7px;top:210.44px;font-size:6.6px;line-height:7.92px;color:#fff;white-space:pre;">123544811</div>
<div style="position:absolute;right:475.5px;top:210.44px;font-size:6.6px;line-height:7.92px;color:#fff;white-space:pre;text-align:right;">17.58</div>
<div style="position:absolute;left:328px;top:210.44px;font-size:6.6px;line-height:7.92px;color:#fff;white-space:pre;">KG</div>
<div style="position:absolute;left:448.5px;top:208.5px;width:39.0px;height:12.5px;border:1.5px solid #111;background:#2f66c0;"></div>
<div style="position:absolute;right:315px;top:210.44px;font-size:6.6px;line-height:7.92px;color:#fff;white-space:pre;text-align:right;">222</div>
<div style="position:absolute;left:492px;top:194.5px;width:166.5px;height:230.0px;background:#f3f2ec;border-left:1px solid #ddd9c6;"></div>
<div style="position:absolute;left:655px;top:194.5px;width:3.5px;height:230.0px;background:#fafaf8;"></div>
<div style="position:absolute;left:494.7px;top:196.20px;font-size:6.5px;line-height:7.80px;color:#000;white-space:pre;">Gyűjtőt kalkuláljon?</div>
<div style="position:absolute;left:494.7px;top:206.80px;font-size:6.5px;line-height:7.80px;color:#000;white-space:pre;">Azonosítási mód</div>
<div style="position:absolute;left:494.7px;top:218.90px;font-size:6.5px;line-height:7.80px;color:#000;white-space:pre;">Készletfajta</div>
<div style="position:absolute;left:494.7px;top:231.40px;font-size:6.5px;line-height:7.80px;color:#000;white-space:pre;">Üzemi munkahely</div>
<div style="position:absolute;left:494.7px;top:243.40px;font-size:6.5px;line-height:7.80px;color:#000;white-space:pre;">Gyártási feladat</div>
<div style="position:absolute;left:494.7px;top:255.90px;font-size:6.5px;line-height:7.80px;color:#000;white-space:pre;">Visszáru ok</div>
<div style="position:absolute;left:494.7px;top:303.90px;font-size:6.5px;line-height:7.80px;color:#000;white-space:pre;">Megjegyzés</div>
<div style="position:absolute;left:494.7px;top:351.90px;font-size:6.5px;line-height:7.80px;color:#000;white-space:pre;">Sarzs kód</div>
<div style="position:absolute;left:494.7px;top:364.40px;font-size:6.5px;line-height:7.80px;color:#000;white-space:pre;">Lejárati dátum</div>
<div style="position:absolute;left:494.7px;top:376.70px;font-size:6.5px;line-height:7.80px;color:#000;white-space:pre;">Szállítói tétel kód</div>
<div style="position:absolute;left:494.7px;top:389.40px;font-size:6.5px;line-height:7.80px;color:#000;white-space:pre;">Gyártási dátum</div>
<div style="position:absolute;left:494.7px;top:401.70px;font-size:6.5px;line-height:7.80px;color:#000;white-space:pre;">Beszállítás napja</div>
<div style="position:absolute;left:494.7px;top:414.40px;font-size:6.5px;line-height:7.80px;color:#000;white-space:pre;">ENAR kód</div>
<div style="position:absolute;left:600px;top:196px;width:9px;height:9px;background:linear-gradient(135deg,#e0e0d8,#fafaf6);border:1px solid #5d84ae;"></div>
<svg style="position:absolute;left:600px;top:196px" width="9" height="9"><path d="M2 4.5 L3.8 6.5 L7.2 2.5" stroke="#21a121" stroke-width="1.6" fill="none"/></svg>
<div style="position:absolute;left:546.5px;top:205px;width:108.5px;height:11.5px;background:#3168c4;border:1px solid #1c3f94;"></div>
<div style="position:absolute;left:549px;top:207.94px;font-size:6.6px;line-height:7.92px;color:#fff;white-space:pre;">Tétel</div>
<div style="position:absolute;left:646px;top:206.5px;width:7.5px;height:8.5px;background:#1c3f94;"></div>
<div style="position:absolute;left:647.8px;top:210px;width:0;height:0;border-left:2px solid transparent;border-right:2px solid transparent;border-top:2.5px solid #fff;"></div>
<div style="position:absolute;left:546.6px;top:216.5px;width:107.89999999999998px;height:207.8px;background:#3168c4;"></div>
<div style="position:absolute;left:546.6px;top:228.3px;width:107.89999999999998px;height:1.0px;background:#9eb0cc;"></div>
<div style="position:absolute;left:546.6px;top:240.5px;width:107.89999999999998px;height:1.0px;background:#9eb0cc;"></div>
<div style="position:absolute;left:546.6px;top:253.3px;width:107.89999999999998px;height:1.0px;background:#9eb0cc;"></div>
<div style="position:absolute;left:546.6px;top:265.5px;width:107.89999999999998px;height:1.0px;background:#9eb0cc;"></div>
<div style="position:absolute;left:546.6px;top:349px;width:107.89999999999998px;height:1px;background:#9eb0cc;"></div>
<div style="position:absolute;left:546.6px;top:361.5px;width:107.89999999999998px;height:1.0px;background:#9eb0cc;"></div>
<div style="position:absolute;left:546.6px;top:374px;width:107.89999999999998px;height:1px;background:#9eb0cc;"></div>
<div style="position:absolute;left:546.6px;top:386.6px;width:107.89999999999998px;height:1.0px;background:#9eb0cc;"></div>
<div style="position:absolute;left:546.6px;top:399.2px;width:107.89999999999998px;height:1.0px;background:#9eb0cc;"></div>
<div style="position:absolute;left:546.6px;top:411.7px;width:107.89999999999998px;height:1.0px;background:#9eb0cc;"></div>
<div style="position:absolute;left:590px;top:216.5px;width:1px;height:11.800000000000011px;background:#9eb0cc;"></div>
<div style="position:absolute;left:590px;top:229.3px;width:1px;height:11.199999999999989px;background:#9eb0cc;"></div>
<div style="position:absolute;left:590px;top:254.3px;width:1px;height:11.199999999999989px;background:#9eb0cc;"></div>
<div style="position:absolute;left:549px;top:219.74px;font-size:6.6px;line-height:7.92px;color:#f0f4ff;white-space:pre;">VG</div>
<div style="position:absolute;left:593px;top:219.74px;font-size:6.6px;line-height:7.92px;color:#f0f4ff;white-space:pre;">Vásárolt göngyöleg</div>
<div style="position:absolute;left:15px;top:415.14px;font-size:6.6px;line-height:7.92px;color:#000;white-space:pre;">Össz. betárolás:</div>
<div style="position:absolute;left:68px;top:404.74px;font-size:6.6px;line-height:7.92px;color:#000;white-space:pre;">Össz. darab (gyűjtő):</div>
<div style="position:absolute;left:174px;top:404.74px;font-size:6.6px;line-height:7.92px;color:#000;white-space:pre;">Össz. mennyiség:</div>
<div style="position:absolute;left:280px;top:404.74px;font-size:6.6px;line-height:7.92px;color:#000;white-space:pre;">Össz. érték:</div>
<div style="position:absolute;left:386px;top:404.74px;font-size:6.6px;line-height:7.92px;color:#000;white-space:pre;">Összesített mennyiségi egység:</div>
<div style="position:absolute;left:68px;top:412px;width:318px;height:12px;background:#3168c4;"></div>
<div style="position:absolute;left:173.8px;top:412px;width:0.799999999999983px;height:12px;background:#9eb0cc;"></div>
<div style="position:absolute;left:279.6px;top:412px;width:0.7999999999999545px;height:12px;background:#9eb0cc;"></div>
<div style="position:absolute;right:416px;top:415.34px;font-size:6.6px;line-height:7.92px;color:#fff;white-space:pre;text-align:right;">0</div>
<div style="position:absolute;left:386px;top:411.5px;width:105.5px;height:13.0px;background:#3168c4;border:1px solid #1c3f94;"></div>
<div style="position:absolute;left:388.5px;top:415.14px;font-size:6.6px;line-height:7.92px;color:#fff;white-space:pre;">KG</div>
<div style="position:absolute;left:482px;top:413px;width:8px;height:10px;background:#1c3f94;"></div>
<div style="position:absolute;left:484px;top:417px;width:0;height:0;border-left:2px solid transparent;border-right:2px solid transparent;border-top:2.5px solid #fff;"></div>
<div style="position:absolute;left:12px;top:431.44px;font-size:6.6px;line-height:7.92px;color:#000;white-space:pre;">-2.0.24 ar1145 E  1 / 1</div>
<div style="position:absolute;left:128.5px;top:429px;width:1.0px;height:11px;background:#d4d0c0;"></div>
<div style="position:absolute;left:129.5px;top:429px;width:1.0px;height:11px;background:#fff;"></div>
<div style="position:absolute;left:131.5px;top:431px;width:8px;height:8px;border-radius:50%;border:1px solid #7d9cc4;background:radial-gradient(#fff,#dfe4ec);"></div>
<div style="position:absolute;left:145px;top:431.64px;font-size:6.6px;line-height:7.92px;color:#000;white-space:pre;">Egységár a készletmozgás fejben megadott pénznemben</div>
<div style="position:absolute;left:656px;top:432px;width:1.5px;height:1.5px;background:#cdc9b8;"></div>
<div style="position:absolute;left:653px;top:435px;width:1.5px;height:1.5px;background:#cdc9b8;"></div>
<div style="position:absolute;left:656px;top:435px;width:1.5px;height:1.5px;background:#cdc9b8;"></div>
<div style="position:absolute;left:650px;top:438px;width:1.5px;height:1.5px;background:#cdc9b8;"></div>
<div style="position:absolute;left:653px;top:438px;width:1.5px;height:1.5px;background:#cdc9b8;"></div>
<div style="position:absolute;left:656px;top:438px;width:1.5px;height:1.5px;background:#cdc9b8;"></div>
</div></body></html>
